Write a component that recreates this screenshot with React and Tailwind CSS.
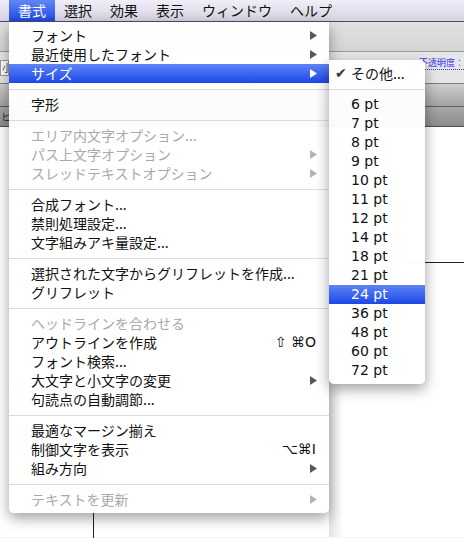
import React from "react"

const jp = { fontFamily: '"Noto Sans CJK JP", "DejaVu Sans", sans-serif' }

const menuBar = ["書式", "選択", "効果", "表示", "ウィンドウ", "ヘルプ"]

const mainMenu = [
  { label: "フォント", arrow: true },
  { label: "最近使用したフォント", arrow: true },
  { label: "サイズ", arrow: true, active: true },
  "sep",
  { label: "字形" },
  "sep",
  { label: "エリア内文字オプション...", disabled: true },
  { label: "パス上文字オプション", disabled: true, arrow: true },
  { label: "スレッドテキストオプション", disabled: true, arrow: true },
  "sep",
  { label: "合成フォント..." },
  { label: "禁則処理設定..." },
  { label: "文字組みアキ量設定..." },
  "sep",
  { label: "選択された文字からグリフレットを作成..." },
  { label: "グリフレット" },
  "sep",
  { label: "ヘッドラインを合わせる", disabled: true },
  { label: "アウトラインを作成", shortcut: "⇧ ⌘O" },
  { label: "フォント検索..." },
  { label: "大文字と小文字の変更", arrow: true },
  { label: "句読点の自動調節..." },
  "sep",
  { label: "最適なマージン揃え" },
  { label: "制御文字を表示", shortcut: "⌥⌘I" },
  { label: "組み方向", arrow: true },
  "sep",
  { label: "テキストを更新", disabled: true, arrow: true }
]

const sizes = ["6", "7", "8", "9", "10", "11", "12", "14", "18", "21", "24", "36", "48", "60", "72"]

function Arrow({ color }) {
  return (
    <svg width="7" height="9" viewBox="0 0 7 9" className="shrink-0">
      <polygon points="0,0 7,4.5 0,9" fill={color} />
    </svg>
  )
}

function Separator() {
  return (
    <div className="flex h-[12px] items-center">
      <div className="h-px w-full bg-[#dcdcdc]" />
    </div>
  )
}

function MenuItem({ item }) {
  const textColor = item.active ? "text-white" : item.disabled ? "text-[#a9a9a9]" : "text-[#111]"
  const arrowColor = item.active ? "#ffffff" : item.disabled ? "#b4b4b4" : "#585858"

  return (
    <div
      className={`flex h-[19px] items-center justify-between pl-[22px] pr-[12px] text-[14px] leading-[19px] ${textColor} ${
        item.active ? "bg-gradient-to-b from-[#5f82f6] to-[#1c46e6]" : ""
      }`}
    >
      <span className="whitespace-nowrap">{item.label}</span>
      {item.arrow ? <Arrow color={arrowColor} /> : null}
      {item.shortcut ? (
        <span className="whitespace-nowrap pr-px text-[14px]" style={{ fontFamily: '"DejaVu Sans", sans-serif' }}>
          {item.shortcut}
        </span>
      ) : null}
    </div>
  )
}

export default function App() {
  return (
    <div className="relative h-[538px] w-[464px] overflow-hidden bg-[#f7f7f7]" style={jp}>
      {/* menu bar */}
      <div className="flex h-[22px] items-stretch border-b border-[#4e4b60] bg-gradient-to-b from-[#f0eef6] via-[#e4e1ee] to-[#d6d1e4] pl-[9px] text-[14px] text-[#111]">
        {menuBar.map((label, index) => (
          <div
            key={label}
            className={`flex items-center px-[9px] leading-[21px] ${
              index === 0 ? "bg-gradient-to-b from-[#6286f6] to-[#1d47e4] text-white" : ""
            }`}
          >
            {label}
          </div>
        ))}
      </div>

      {/* faded app window behind the menus */}
      <div className="h-[30px] border-b border-[#9a9a9a] bg-gradient-to-b from-[#e2e2e2] to-[#d4d4d4]" />
      <div className="flex h-[32px] items-start justify-between border-b border-[#7c7c7c] bg-[#e6e6e6]">
        <div className="mt-[8px] h-[16px] w-[9px] border border-[#9c9c9c] bg-white pl-px text-[10px] leading-[14px] text-[#444]">小</div>
        <div className="mt-[4px] border-b border-dotted border-[#3a3af0] text-[9px] leading-[13px] text-[#3636f2]">不透明度：</div>
      </div>
      <div className="h-[23px] border-b border-[#5e5e5e] bg-gradient-to-b from-[#cfcfcf] to-[#a2a2a2]" />
      <div className="h-[20px] border-b border-[#4c4c4c] bg-gradient-to-b from-[#a8a8a8] to-[#8c8c8c] pl-px text-[10px] leading-[20px] text-[#333]">
        ヒ-
      </div>
      <div className="relative h-[410px] bg-white">
        <div className="absolute left-[329px] top-0 h-full w-[14px] bg-gradient-to-r from-[#e2e2e2] to-transparent" />
        <div className="absolute right-0 top-[135px] h-px w-[60px] bg-[#222]" />
        <div className="absolute left-[93px] top-[360px] h-[60px] w-px bg-[#222]" />
      </div>

      {/* main menu */}
      <div className="absolute left-[9px] top-[22px] w-[320px] rounded-b-[5px] bg-white/[0.97] pb-[4px] pt-[4px] shadow-[0_5px_14px_rgba(0,0,0,0.38)]">
        {mainMenu.map((item, index) =>
          item === "sep" ? <Separator key={index} /> : <MenuItem key={index} item={item} />
        )}
      </div>

      {/* size submenu */}
      <div className="absolute left-[329px] top-[60px] w-[96px] rounded-[5px] rounded-tl-none bg-white/[0.97] pb-[4px] pt-[4px] shadow-[0_5px_14px_rgba(0,0,0,0.38)]">
        <div className="flex h-[19px] items-center text-[14px] leading-[19px] text-[#111]">
          <span className="w-[22px] pl-[6px] text-[14px] text-[#333]" style={{ fontFamily: '"DejaVu Sans", sans-serif' }}>
            ✔
          </span>
          <span>その他...</span>
        </div>
        <Separator />
        {sizes.map(size => (
          <div
            key={size}
            className={`flex h-[19px] items-center pl-[22px] text-[14px] leading-[19px] ${
              size === "24" ? "bg-gradient-to-b from-[#5f82f6] to-[#1c46e6] text-white" : "text-[#111]"
            }`}
            style={{ fontFamily: '"DejaVu Sans", sans-serif' }}
          >
            {size} pt
          </div>
        ))}
      </div>
    </div>
  )
}
